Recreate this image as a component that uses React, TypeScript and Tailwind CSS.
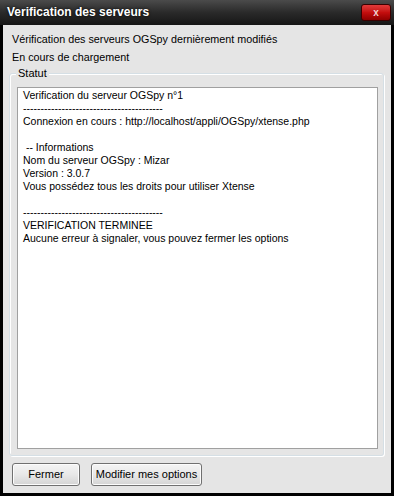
import React from 'react';

const DASHES = '----------------------------------------';

const LOG_LINES = [
    'Verification du serveur OGSpy n°1',
    DASHES,
    'Connexion en cours : http://localhost/appli/OGSpy/xtense.php',
    '',
    ' -- Informations',
    'Nom du serveur OGSpy : Mizar',
    'Version : 3.0.7',
    'Vous possédez tous les droits pour utiliser Xtense',
    '',
    DASHES,
    'VERIFICATION TERMINEE',
    'Aucune erreur à signaler, vous pouvez fermer les options',
];

const WinButton: React.FC<{ label: string; className?: string }> = ({ label, className }) => (
    <button
        className={
            'h-[23px] rounded-[3px] border border-[#707070] bg-gradient-to-b from-[#f4f4f4] via-[#e8e8e8] to-[#d4d4d4] text-[11px] text-black whitespace-nowrap shadow-[inset_0_0_0_1px_#fcfcfc] ' +
            (className ?? '')
        }
    >
        {label}
    </button>
);

const App: React.FC = () => {
    return (
        <div className="w-[394px] h-[496px] bg-black flex flex-col font-['Liberation_Sans',Arial,sans-serif] select-none">
            {/* title bar */}
            <div className="h-[25px] shrink-0 flex items-start justify-between bg-gradient-to-b from-[#4b4b4b] via-[#2a2a2a] to-[#161616] pl-[7px] pr-[3px]">
                <span className="mt-[5px] text-[12px] font-bold text-white leading-[14px] [text-shadow:0_0_3px_#000]">
                    Verification des serveurs
                </span>
                <div className="mt-[4px] w-[30px] h-[17px] rounded-[3px] border border-[#3a0000] bg-gradient-to-b from-[#e03a3a] via-[#c40e0e] to-[#8f0000] flex items-center justify-center">
                    <span className="text-[#f0d0d0] text-[10px] font-bold leading-none">x</span>
                </div>
            </div>

            {/* client area */}
            <div className="flex-1 mx-[3px] mb-[3px] bg-[#e5e5e5] flex flex-col">
                <div className="pl-[9px] pt-[5px] text-[10.75px] text-black leading-[18px]">
                    <div>Vérification des serveurs OGSpy dernièrement modifiés</div>
                    <div>En cours de chargement</div>
                </div>

                {/* group box */}
                <div className="relative mt-[7px] ml-[6px] mr-[7px] h-[383px] rounded-[3px] border border-[#d5dfe5] shadow-[1px_1px_0_#fff,inset_1px_1px_0_#fff]">
                    <span className="absolute -top-[8px] left-[6px] px-[2px] bg-[#e5e5e5] text-[11px] leading-[14px] text-black">
                        Statut
                    </span>
                    <div className="mt-[13px] ml-[7px] mr-[5px] h-[362px] bg-white border border-[#a0a0a0] px-[5px] pt-[1px] text-[10.5px] leading-[13px] text-black whitespace-pre">
                        {LOG_LINES.map((line, i) => (
                            <div key={i} className="h-[13px]">
                                {line}
                            </div>
                        ))}
                    </div>
                </div>

                <div className="flex gap-[11px] ml-[9px] mt-[7px]">
                    <WinButton label="Fermer" className="w-[68px]" />
                    <WinButton label="Modifier mes options" className="w-[111px]" />
                </div>
            </div>
        </div>
    );
};

export default App;
